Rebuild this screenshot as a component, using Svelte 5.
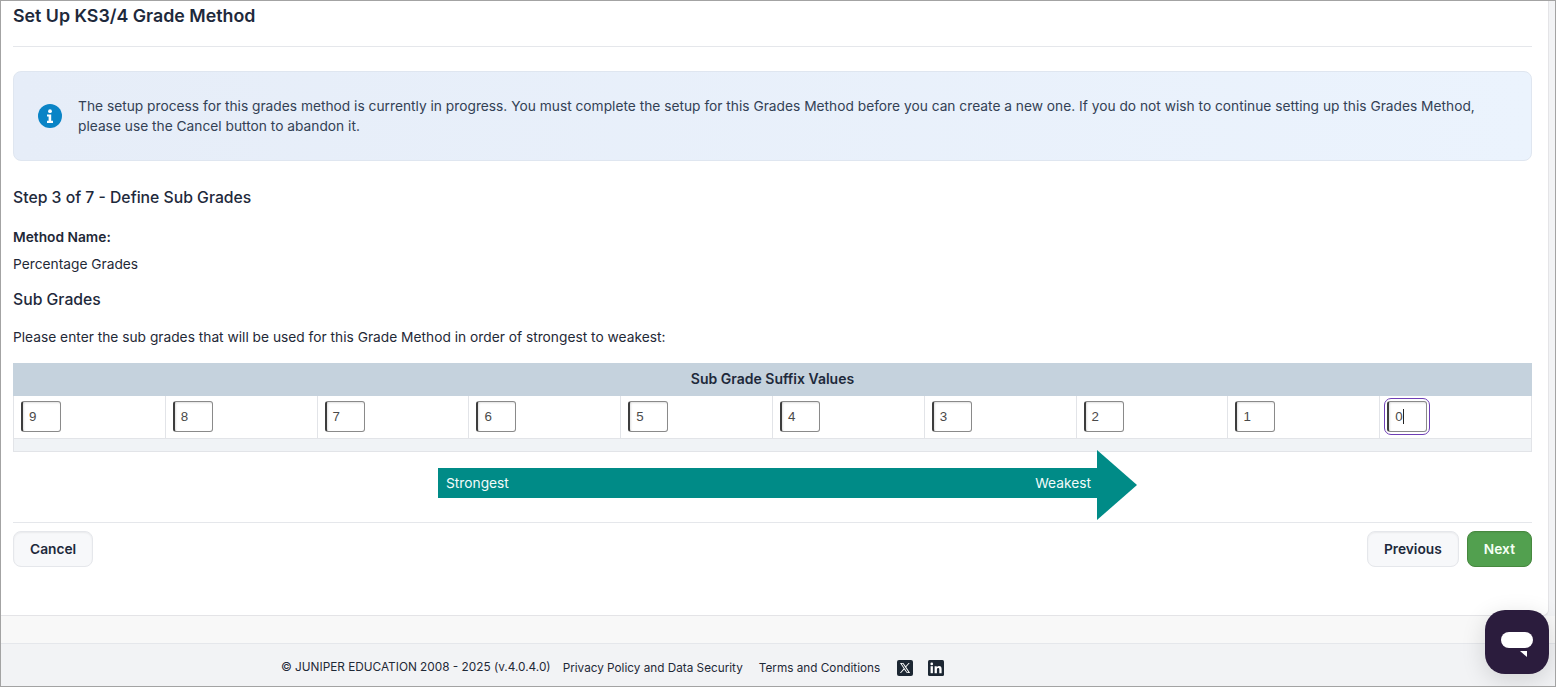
<script>
  const grades = ['9', '8', '7', '6', '5', '4', '3', '2', '1', '0'];
</script>

<div class="frame">
  <main class="card">
    <h1>Set Up KS3/4 Grade Method</h1>
    <hr class="rule title-rule" />

    <div class="notice">
      <svg class="info" viewBox="0 0 24 24" aria-hidden="true">
        <circle cx="12" cy="12" r="12" fill="#0a84c6" />
        <circle cx="12" cy="7.2" r="1.9" fill="#fff" />
        <path d="M9 10.4h4.2v6.4H15v2.2H9v-2.2h1.600v-4.2H9z" fill="#fff" />
      </svg>
      <p>The setup process for this grades method is currently in progress. You must complete the setup for this Grades Method before you can create a new one. If you do not wish to continue setting up this Grades Method, please use the Cancel button to abandon it.</p>
    </div>

    <h2 class="step">Step 3 of 7 - Define Sub Grades</h2>
    <div class="label">Method Name:</div>
    <div class="value">Percentage Grades</div>
    <h2 class="sub">Sub Grades</h2>
    <p class="intro">Please enter the sub grades that will be used for this Grade Method in order of strongest to weakest:</p>

    <div class="grades">
      <div class="grades-head">Sub Grade Suffix Values</div>
      <div class="grades-row">
        {#each grades as grade, i}
          <div class="cell">
            <span class="field" class:focused={i === grades.length - 1}>
              <span class="input">{grade}{#if i === grades.length - 1}<i class="caret"></i>{/if}</span>
            </span>
          </div>
        {/each}
      </div>
      <div class="grades-foot"></div>
    </div>

    <div class="arrow-wrap">
      <div class="arrow">
        <div class="shaft"><span>Strongest</span><span>Weakest</span></div>
        <div class="head"></div>
      </div>
    </div>

    <div class="actions">
      <button class="btn" type="button">Cancel</button>
      <div class="right">
        <button class="btn" type="button">Previous</button>
        <button class="btn btn-next" type="button">Next</button>
      </div>
    </div>
  </main>

  <div class="band"></div>

  <footer>
    <span class="copy">© JUNIPER EDUCATION 2008 - 2025 (v.4.0.4.0)</span>
    <span class="link first">Privacy Policy and Data Security</span>
    <span class="link second">Terms and Conditions</span>
    <svg class="social x" viewBox="0 0 16 16" aria-hidden="true">
      <rect width="16" height="16" rx="2" fill="#1d2733" />
      <path d="M3 3h3.300l2.400 3.300L11.600 3h1.100L9.200 7l3.900 6H9.800L7.200 9.400 4 13H2.900l3.800-4.400zm1.600.8 5.600 8.400h1.200L5.800 3.800z" fill="#fff" />
    </svg>
    <svg class="social" viewBox="0 0 16 16" aria-hidden="true">
      <rect width="16" height="16" rx="1.500" fill="#1d2733" />
      <rect x="2.600" y="6.200" width="2.300" height="7" fill="#fff" />
      <circle cx="3.750" cy="3.900" r="1.350" fill="#fff" />
      <path d="M6.600 6.200h2.200v1c.5-.8 1.300-1.200 2.300-1.200 1.800 0 2.500 1.100 2.500 3v4.200h-2.300V9.500c0-1-.3-1.500-1.100-1.500-.9 0-1.300.6-1.300 1.600v3.600H6.600z" fill="#fff" />
    </svg>
  </footer>

  <button class="chat" type="button" aria-label="Open chat">
    <svg viewBox="0 0 32 26" width="32" height="26" aria-hidden="true">
      <rect x="0" y="0" width="32" height="16" rx="8" fill="#fff" />
      <path d="M19 19h7v6z" fill="#fff" />
    </svg>
  </button>
</div>

<style>
  :global(body) {
    margin: 0;
    font-family: Inter, "Liberation Sans", sans-serif;
    color: #1f2937;
    background: #fff;
  }

  .frame {
    position: relative;
    box-sizing: border-box;
    height: 687px;
    overflow: hidden;
    display: flex;
    flex-direction: column;
    border: 1px solid #a3a3a3;
    background: #f2f3f5;
  }

  .card {
    box-sizing: border-box;
    height: 615px;
    flex: none;
    margin-right: 6px;
    padding: 0 16px 0 12px;
    background: #fff;
    border-right: 1px solid #e4e4e7;
    border-bottom: 1px solid #e4e4e7;
    border-bottom-right-radius: 6px;
  }

  h1 {
    margin: 0;
    padding-top: 4px;
    font-size: 17.8px;
    line-height: 22px;
    font-weight: 600;
    color: #1e293b;
  }

  .rule {
    border: 0;
    height: 1px;
    margin: 0;
    background: #e5e7eb;
  }

  .title-rule {
    margin-top: 19px;
  }

  .notice {
    box-sizing: border-box;
    height: 90px;
    margin-top: 24px;
    padding: 0 24px;
    display: flex;
    align-items: center;
    gap: 16px;
    border: 1px solid #dfe6f0;
    border-radius: 8px;
    background: linear-gradient(90deg, #e6edf8, #ebf3fd);
  }

  .info {
    flex: none;
    width: 24px;
    height: 24px;
  }

  .notice p {
    margin: 0;
    font-size: 13.75px;
    line-height: 20px;
    color: #334155;
  }

  h2 {
    margin: 0;
    font-size: 15.75px;
    line-height: 20px;
    font-weight: 500;
    color: #1e293b;
  }

  .step {
    margin-top: 27px;
  }

  .label {
    margin-top: 20px;
    font-size: 13.75px;
    line-height: 18px;
    font-weight: 600;
    color: #1f2937;
  }

  .value {
    margin-top: 9px;
    font-size: 13.75px;
    line-height: 18px;
    color: #1f2937;
  }

  .sub {
    margin-top: 17px;
  }

  .intro {
    margin: 18px 0 0;
    font-size: 13.75px;
    line-height: 18px;
    color: #1f2937;
  }

  .grades {
    margin-top: 17px;
  }

  .grades-head {
    height: 33px;
    line-height: 32px;
    text-align: center;
    font-size: 14px;
    font-weight: 600;
    color: #1e293b;
    background: #c5d2dd;
  }

  .grades-row {
    display: grid;
    grid-template-columns: repeat(9, 151.8px) 1fr;
    height: 42px;
  }

  .cell {
    box-sizing: border-box;
    padding: 5px 7px;
    border-left: 1px solid #e2e4e8;
  }

  .cell:last-child {
    border-right: 1px solid #e2e4e8;
  }

  .field {
    display: inline-block;
    border-radius: 4px;
  }

  .input {
    display: block;
    box-sizing: border-box;
    width: 40px;
    height: 31px;
    padding-left: 6px;
    border: 1px solid #8a8a8a;
    border-left: 2px solid #3d3d3d;
    border-radius: 3px;
    font-family: "Liberation Sans", sans-serif;
    font-size: 13.33px;
    line-height: 29px;
    color: #4a4a4a;
    box-shadow: inset 1px 1px 2px rgba(0, 0, 0, 0.12);
  }

  .focused {
    outline: 1px solid #6f3fb5;
    outline-offset: 2px;
  }

  .caret {
    display: inline-block;
    width: 1px;
    height: 15px;
    vertical-align: -3px;
    background: #222;
  }

  .grades-foot {
    box-sizing: border-box;
    height: 14px;
    background: #f0f3f6;
    border: 1px solid #e2e4e8;
  }

  .arrow-wrap {
    display: flex;
    justify-content: center;
    align-items: flex-start;
    margin-top: -1px;
    padding-left: 30px;
    height: 71px;
    border-bottom: 1px solid #e5e7eb;
  }

  .arrow {
    display: flex;
    align-items: flex-start;
    margin-top: -1px;
  }

  .shaft {
    box-sizing: border-box;
    width: 659px;
    height: 30px;
    margin-top: 18px;
    padding: 0 6px 0 8px;
    display: flex;
    justify-content: space-between;
    align-items: center;
    font-size: 13.75px;
    color: #f2fbfa;
    background: #008b87;
  }

  .head {
    width: 0;
    height: 0;
    border-top: 35px solid transparent;
    border-bottom: 35px solid transparent;
    border-left: 40px solid #008b87;
  }

  .actions {
    display: flex;
    justify-content: space-between;
    margin-top: 8px;
  }

  .right {
    display: flex;
    gap: 8px;
  }

  .btn {
    box-sizing: border-box;
    height: 36px;
    padding: 0 16px;
    font-family: inherit;
    font-size: 13.75px;
    font-weight: 600;
    color: #1e293b;
    background: #f7f8fa;
    border: 1px solid #e5e7eb;
    border-radius: 8px;
    box-shadow: inset 0 1px 2px rgba(0, 0, 0, 0.06);
  }

  .btn-next {
    color: #f4fff4;
    background: #52a04f;
    border-color: #47883f;
  }

  .band {
    box-sizing: border-box;
    height: 28px;
    flex: none;
    background: #f8f8f8;
    border-bottom: 1px solid #e5e7eb;
  }

  footer {
    display: flex;
    align-items: center;
    height: 42px;
    padding: 6px 0 0 280px;
    box-sizing: border-box;
    font-size: 11.8px;
    color: #1f2937;
  }

  .copy {
    margin-top: -2px;
  }

  .link {
    font-size: 11.75px;
  }

  .first {
    margin-left: 12px;
  }

  .second {
    margin-left: 16px;
  }

  .social {
    width: 16px;
    height: 16px;
    margin-left: 15px;
  }

  .social.x {
    margin-left: 17px;
  }

  .chat {
    position: absolute;
    right: 6px;
    bottom: 12px;
    width: 64px;
    height: 64px;
    padding: 6px 0 0;
    border: 0;
    border-radius: 20px;
    background: #2b1c3d;
    box-shadow: 0 6px 24px rgba(0, 0, 0, 0.14);
    display: flex;
    align-items: center;
    justify-content: center;
  }
</style>
